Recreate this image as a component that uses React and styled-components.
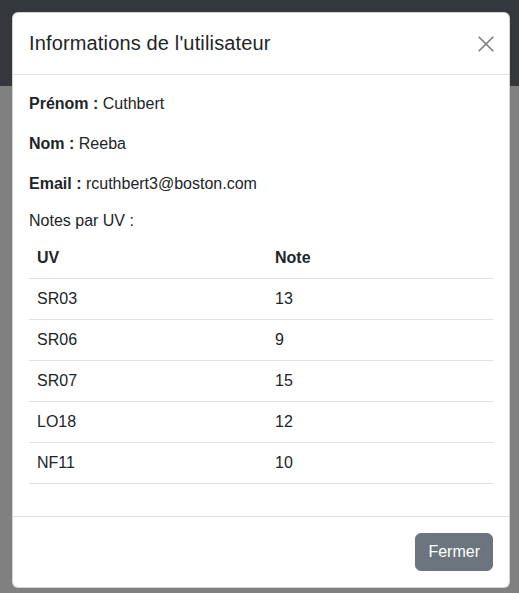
import React from "react";
import styled, { createGlobalStyle } from "styled-components";

const GlobalStyle = createGlobalStyle`
  * { box-sizing: border-box; }
  body {
    margin: 0;
    font-family: "Liberation Sans", Arial, Helvetica, sans-serif;
    font-size: 16px;
    line-height: 1.5;
    color: #212529;
    background: #808080;
  }
`;

const Page = styled.div`
  position: relative;
  min-height: 593px;
  background: #808080;
`;

const TopBar = styled.div`
  height: 86px;
  background: #34383c;
`;

const Modal = styled.div`
  position: absolute;
  top: 12px;
  left: 12px;
  width: 498px;
  display: flex;
  flex-direction: column;
  background: #fff;
  border: 1px solid rgba(0, 0, 0, 0.175);
  border-radius: 6px;
`;

const Header = styled.div`
  display: flex;
  align-items: center;
  justify-content: space-between;
  padding: 16px;
  border-bottom: 1px solid #dee2e6;
`;

const Title = styled.h5`
  margin: 0;
  font-size: 20px;
  font-weight: 500;
  line-height: 29px;
  letter-spacing: 0.15px;
  color: #212529;
`;

const CloseButton = styled.button`
  display: flex;
  align-items: center;
  justify-content: center;
  width: 16px;
  height: 16px;
  margin-right: -1px;
  padding: 0;
  border: 0;
  background: none;
  cursor: pointer;
  opacity: 0.5;
`;

const Body = styled.div`
  padding: 17px 16px 16px;
`;

const Field = styled.p`
  margin: 0 0 ${(p) => p.$mb ?? 16}px;
  line-height: 24px;
`;

const Label = styled.strong`
  font-weight: 700;
`;

const NotesLabel = styled.div`
  margin-bottom: 5px;
  line-height: 24px;
`;

const Table = styled.table`
  width: 100%;
  border-collapse: collapse;
  margin-bottom: 16px;
`;

const Th = styled.th`
  text-align: left;
  font-weight: 700;
  padding: 8px;
  line-height: 24px;
  border-bottom: 1px solid #dee2e6;
  width: ${(p) => p.$w || "auto"};
`;

const Td = styled.td`
  padding: 8px;
  line-height: 24px;
  border-bottom: 1px solid #dee2e6;
`;

const Footer = styled.div`
  display: flex;
  justify-content: flex-end;
  align-items: center;
  padding: 12px;
  border-top: 1px solid #dee2e6;
`;

const Button = styled.button`
  margin: 4px;
  padding: 6px 12px;
  font-family: inherit;
  font-size: 16px;
  line-height: 24px;
  color: #fff;
  background: #6c757d;
  border: 1px solid #6c757d;
  border-radius: 6px;
  cursor: pointer;
`;

const notes = [
  ["SR03", 13],
  ["SR06", 9],
  ["SR07", 15],
  ["LO18", 12],
  ["NF11", 10],
];

export default function App() {
  return (
    <>
      <GlobalStyle />
      <Page>
        <TopBar />
        <Modal>
          <Header>
            <Title>Informations de l'utilisateur</Title>
            <CloseButton aria-label="Close">
              <svg width="16" height="16" viewBox="0 0 16 16">
                <path d="M0.7 0.7 L15.3 15.3 M15.3 0.7 L0.7 15.3" stroke="#000" strokeWidth="1.6" fill="none" />
              </svg>
            </CloseButton>
          </Header>
          <Body>
            <Field>
              <Label>Prénom :</Label> Cuthbert
            </Field>
            <Field>
              <Label>Nom :</Label> Reeba
            </Field>
            <Field $mb={13}>
              <Label>Email :</Label> rcuthbert3@boston.com
            </Field>
            <NotesLabel>Notes par UV :</NotesLabel>
            <Table>
              <thead>
                <tr>
                  <Th $w="238px">UV</Th>
                  <Th>Note</Th>
                </tr>
              </thead>
              <tbody>
                {notes.map(([uv, n]) => (
                  <tr key={uv}>
                    <Td>{uv}</Td>
                    <Td>{n}</Td>
                  </tr>
                ))}
              </tbody>
            </Table>
          </Body>
          <Footer>
            <Button>Fermer</Button>
          </Footer>
        </Modal>
      </Page>
    </>
  );
}
